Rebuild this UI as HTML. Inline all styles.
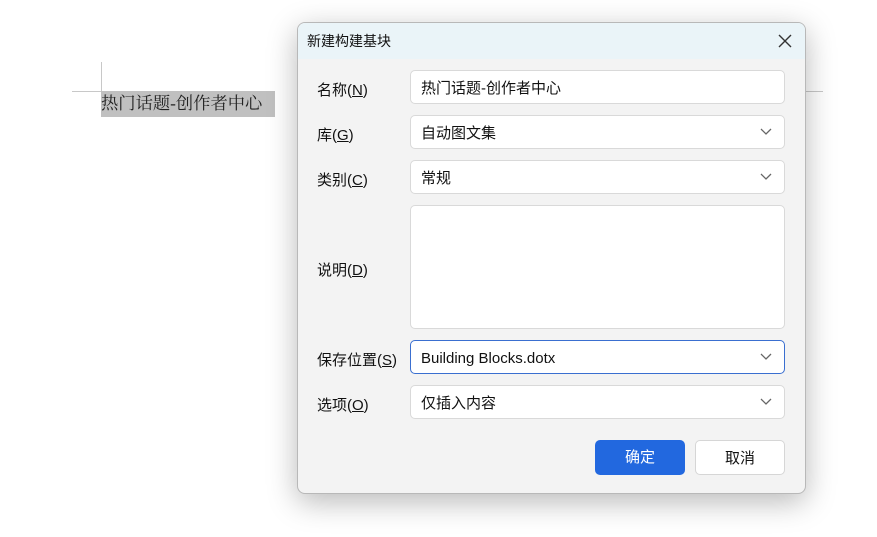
<!DOCTYPE html>
<html><head><meta charset="utf-8"><style>
body{margin:0;width:877px;height:537px;background:#fff;position:relative;overflow:hidden;font-family:"Liberation Sans","Microsoft YaHei","Noto Sans CJK SC",sans-serif;}
.abs{position:absolute}
.dlg{left:297px;top:22px;width:507px;height:470px;background:#f3f3f3;border:1px solid #b8b8b8;border-radius:8px;box-shadow:0 8px 30px rgba(0,0,0,.28);overflow:hidden}
.title{left:0;top:0;width:507px;height:36px;background:#eaf4f8;font-size:14px;line-height:36px;padding-left:9px;box-sizing:border-box;color:#111}
.lbl{left:19px;font-size:15px;color:#111}
.fld{left:112px;width:375px;background:#fff;border:1px solid #d9d9d9;border-radius:5px;box-sizing:border-box;font-size:15px;color:#111;padding-left:10px;line-height:35px;height:34px}
.chev{position:absolute;right:12px;top:12px}
.btn{top:417px;width:90px;height:35px;border-radius:5px;box-sizing:border-box;font-size:15px;text-align:center;line-height:36px}
</style></head><body>
<div class="abs" style="left:101px;top:62px;width:1px;height:29px;background:#c8c8c8"></div>
<div class="abs" style="left:72px;top:91px;width:29px;height:1px;background:#c8c8c8"></div>
<div class="abs" style="left:805px;top:91px;width:18px;height:1px;background:#c8c8c8"></div>
<div class="abs" style="left:101px;top:91px;width:174px;height:26px;background:#c0c0c0;font-family:'Liberation Serif','Noto Serif CJK SC',serif;font-size:17.3px;line-height:25px;color:#222;white-space:nowrap">热门话题-创作者中心</div>
<div class="abs dlg">
<div class="abs title">新建构建基块</div>
<svg class="abs" style="left:480px;top:11px" width="14" height="14"><path d="M1 1L13 13M13 1L1 13" stroke="#333" stroke-width="1.4"/></svg>
<div class="abs lbl" style="top:56px">名称(<u>N</u>)</div>
<div class="abs fld" style="top:47px">热门话题-创作者中心</div>
<div class="abs lbl" style="top:101px">库(<u>G</u>)</div>
<div class="abs fld" style="top:92px">自动图文集<svg class="chev" width="12" height="8"><path d="M1 1L6 6L11 1" stroke="#666" fill="none" stroke-width="1.3"/></svg></div>
<div class="abs lbl" style="top:146px">类别(<u>C</u>)</div>
<div class="abs fld" style="top:137px">常规<svg class="chev" width="12" height="8"><path d="M1 1L6 6L11 1" stroke="#666" fill="none" stroke-width="1.3"/></svg></div>
<div class="abs lbl" style="top:236px">说明(<u>D</u>)</div>
<div class="abs fld" style="top:182px;height:124px"></div>
<div class="abs lbl" style="top:326px">保存位置(<u>S</u>)</div>
<div class="abs fld" style="top:317px;border-color:#3a6fd0">Building Blocks.dotx<svg class="chev" width="12" height="8"><path d="M1 1L6 6L11 1" stroke="#666" fill="none" stroke-width="1.3"/></svg></div>
<div class="abs lbl" style="top:371px">选项(<u>O</u>)</div>
<div class="abs fld" style="top:362px">仅插入内容<svg class="chev" width="12" height="8"><path d="M1 1L6 6L11 1" stroke="#666" fill="none" stroke-width="1.3"/></svg></div>
<div class="abs btn" style="left:297px;background:#2268df;color:#fff">确定</div>
<div class="abs btn" style="left:397px;background:#fff;border:1px solid #d6d6d6;color:#111">取消</div>
</div>
</body></html>
